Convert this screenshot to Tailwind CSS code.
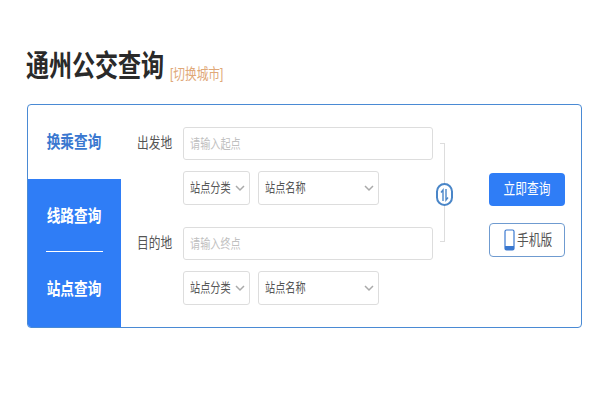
<!DOCTYPE html>
<html lang="zh"><head><meta charset="utf-8"><script src="https://cdn.jsdelivr.net/npm/@tailwindcss/browser@4"></script></head>
<body class="bg-white w-[600px] h-[400px] overflow-hidden font-['Liberation_Sans','Noto_Sans_CJK_SC',sans-serif]">
<div class="pt-[47px] pl-[26px]">
  <div class="flex items-end h-[38px]">
    <h1 class="w-[138px] whitespace-nowrap origin-left scale-x-[0.78] text-[29.5px] leading-[38px] font-bold text-[#2a2a2a]">通州公交查询</h1>
    <a class="ml-[6px] mb-[2px] w-[54px] whitespace-nowrap origin-left scale-x-[0.78] text-[15px] leading-[18px] text-[#e0a878]">[切换城市]</a>
  </div>
  <div class="mt-[19px] ml-px w-[555px] h-[224px] border border-[#4a8ad4] rounded-[4px] flex overflow-hidden">
    <div class="w-[93px] shrink-0 flex flex-col text-[17.5px] font-bold">
      <div class="h-[74px] pr-[1px] flex items-center justify-center text-[#3a78d0]"><span class="scale-x-[0.78] whitespace-nowrap shrink-0">换乘查询</span></div>
      <div class="flex-1 bg-[#2f7df6] text-white flex flex-col items-center">
        <div class="h-[72px] pt-[2px] pr-[1px] flex items-center justify-center"><span class="scale-x-[0.78] whitespace-nowrap shrink-0">线路查询</span></div>
        <div class="w-[57px] h-px bg-white"></div>
        <div class="h-[73px] pt-[2px] pr-[1px] flex items-center justify-center"><span class="scale-x-[0.78] whitespace-nowrap shrink-0">站点查询</span></div>
      </div>
    </div>
    <div class="pt-[22px] pl-[16px] flex flex-col text-[#555] text-[15px]">
      <div class="flex items-center h-[33px]">
        <span class="w-[46px] whitespace-nowrap origin-left scale-x-[0.78]">出发地</span>
        <div class="w-[250px] h-[33px] border border-[#ddd] rounded-[3px] px-[6px] flex items-center text-[13px] text-[#c0c0c0]"><span class="whitespace-nowrap origin-left scale-x-[0.78]">请输入起点</span></div>
      </div>
      <div class="flex mt-[11px] ml-[46px] gap-[8px] h-[34px] text-[13px]">
        <div class="w-[67px] border border-[#ddd] rounded-[3px] pl-[6px] flex items-center justify-between pr-[3px]"><span class="w-[42px] whitespace-nowrap origin-left scale-x-[0.78]">站点分类</span><svg class="w-[12px] h-[12px]" viewBox="0 0 12 12" fill="none" stroke="#aaa" stroke-width="1.5"><path d="M2 4l4 4 4-4"/></svg></div>
        <div class="w-[121px] border border-[#ddd] rounded-[3px] pl-[6px] flex items-center justify-between pr-[3px]"><span class="w-[42px] whitespace-nowrap origin-left scale-x-[0.78]">站点名称</span><svg class="w-[12px] h-[12px]" viewBox="0 0 12 12" fill="none" stroke="#aaa" stroke-width="1.5"><path d="M2 4l4 4 4-4"/></svg></div>
      </div>
      <div class="flex items-center h-[33px] mt-[22px]">
        <span class="w-[46px] whitespace-nowrap origin-left scale-x-[0.78]">目的地</span>
        <div class="w-[250px] h-[33px] border border-[#ddd] rounded-[3px] px-[6px] flex items-center text-[13px] text-[#c0c0c0]"><span class="whitespace-nowrap origin-left scale-x-[0.78]">请输入终点</span></div>
      </div>
      <div class="flex mt-[11px] ml-[46px] gap-[8px] h-[34px] text-[13px]">
        <div class="w-[67px] border border-[#ddd] rounded-[3px] pl-[6px] flex items-center justify-between pr-[3px]"><span class="w-[42px] whitespace-nowrap origin-left scale-x-[0.78]">站点分类</span><svg class="w-[12px] h-[12px]" viewBox="0 0 12 12" fill="none" stroke="#aaa" stroke-width="1.5"><path d="M2 4l4 4 4-4"/></svg></div>
        <div class="w-[121px] border border-[#ddd] rounded-[3px] pl-[6px] flex items-center justify-between pr-[3px]"><span class="w-[42px] whitespace-nowrap origin-left scale-x-[0.78]">站点名称</span><svg class="w-[12px] h-[12px]" viewBox="0 0 12 12" fill="none" stroke="#aaa" stroke-width="1.5"><path d="M2 4l4 4 4-4"/></svg></div>
      </div>
    </div>
    <div class="mt-[38px] w-[22px] h-[99px] relative shrink-0">
      <div class="ml-[7px] w-[5px] h-full border-y border-r border-[#ddd]"></div>
      <div class="absolute left-[3px] top-[40px] w-[17px] h-[23px] rounded-full bg-white border-2 border-[#4a86c8] flex items-center justify-center">
        <svg class="w-[11px] h-[14px]" viewBox="0 0 11 14" fill="none" stroke="#4a86c8" stroke-width="1.4"><path d="M4 13V2L2 4.5M7 1v11l2-2.5"/></svg>
      </div>
    </div>
    <div class="ml-[34px] mt-[68px] flex flex-col gap-[17px]">
      <div class="w-[76px] h-[33px] bg-[#2f7df6] rounded-[4px] text-white text-[15px] flex items-center justify-center"><span class="scale-x-[0.78] whitespace-nowrap shrink-0">立即查询</span></div>
      <div class="w-[76px] h-[34px] border border-[#6f9bd0] rounded-[4px] text-[#555] text-[15px] flex items-center pl-[14px] gap-[2px]">
        <svg class="w-[11px] h-[22px] shrink-0" viewBox="0 0 11 22" fill="none"><rect x="1" y="1" width="9" height="20" rx="1.5" stroke="#3a78d0" stroke-width="1.2"/><rect x="1" y="17" width="9" height="4" fill="#3a78d0"/></svg><span class="w-[36px] whitespace-nowrap origin-left scale-x-[0.78]">手机版</span>
      </div>
    </div>
  </div>
</div>
</body></html>
